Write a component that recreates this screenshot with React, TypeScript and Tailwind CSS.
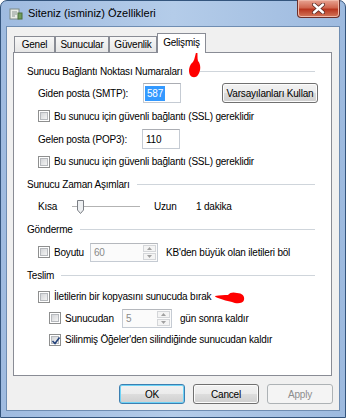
import React from "react";

// Win7 "Siteniz (isminiz) Özellikleri" dialog, Gelişmiş tab

function CheckBox({ checked }: { checked?: boolean }) {
    return (
        <span className="w-[12px] h-[12px] border border-[#8e8f8f] bg-white p-[1px] flex shrink-0">
            <span className="relative flex-1 border border-[#b6b9bd] bg-[linear-gradient(135deg,#d3d5d8,#f4f4f4)]">
                {checked && (
                    <svg width="10" height="10" viewBox="0 0 10 10" className="absolute -left-[1px] -top-[1px]">
                        <path d="M1.5 5 L4 7.5 L8.5 1.5" fill="none" stroke="#22417a" strokeWidth="1.6" />
                    </svg>
                )}
            </span>
        </span>
    );
}

function GroupHeader({ title, lineStart }: { title: string; lineStart?: string }) {
    return (
        <div className="flex items-center h-[22px] pl-[13px] pr-[16px]">
            <span className="whitespace-nowrap">{title}</span>
            <span className={`flex-1 h-px bg-[#cfd5db] ${lineStart ?? "ml-[7px]"}`} />
        </div>
    );
}

function TextBox({ value, selected }: { value: string; selected?: boolean }) {
    return (
        <div className="w-[38px] h-[20px] border border-[#c5cbd3] border-t-[#abadb3] bg-white flex items-center pl-[1px]">
            <span className={selected ? "bg-[#3399ff] text-white px-[2px]" : "px-[2px]"}>{value}</span>
        </div>
    );
}

function SpinBox({ value, width }: { value: string; width: string }) {
    return (
        <div className={`${width} h-[19px] border border-[#c5cbd3] border-t-[#b5b8bd] bg-[#fbfbfb] flex`}>
            <span className="flex-1 pl-[3px] flex items-center text-[#8a8a8a]">{value}</span>
            <div className="w-[15px] flex flex-col gap-px p-px">
                <div className="flex-1 border border-[#d4d6d9] bg-[#f4f4f4] flex items-center justify-center">
                    <svg width="5" height="3" viewBox="0 0 5 3"><path d="M0 3 L2.5 0 L5 3 Z" fill="#a0a0a0" /></svg>
                </div>
                <div className="flex-1 border border-[#d4d6d9] bg-[#f4f4f4] flex items-center justify-center">
                    <svg width="5" height="3" viewBox="0 0 5 3"><path d="M0 0 L2.5 3 L5 0 Z" fill="#a0a0a0" /></svg>
                </div>
            </div>
        </div>
    );
}

function Button({ label, kind }: { label: string; kind?: "default" | "disabled" }) {
    if (kind === "disabled") {
        return (
            <div className="w-[66px] h-[20px] rounded-[3px] border border-[#adb2b5] bg-[#f4f4f4] flex items-center justify-center text-[#8d8d8d]">
                {label}
            </div>
        );
    }
    const ring = kind === "default"
        ? "border-[#3c7fb1] shadow-[inset_0_0_0_1px_#6ed3f6]"
        : "border-[#707070] shadow-[inset_0_0_0_1px_#fcfcfc]";
    return (
        <div className={`w-[66px] h-[20px] rounded-[3px] border ${ring} bg-[linear-gradient(#f2f2f2,#ebebeb_50%,#dddddd_50%,#cfcfcf)] flex items-center justify-center text-black`}>
            {label}
        </div>
    );
}

function Tab({ label, width, active }: { label: string; width: string; active?: boolean }) {
    if (active) {
        return (
            <div className={`${width} h-[20px] -mb-px relative z-10 border border-b-0 border-[#898c95] bg-white flex items-center justify-center pb-[2px]`}>
                {label}
            </div>
        );
    }
    return (
        <div className={`${width} h-[16px] border border-b-0 border-[#898c95] bg-[linear-gradient(#f7f7f7,#e6e6e6)] flex items-center justify-center`}>
            {label}
        </div>
    );
}

function CloseButton() {
    return (
        <div className="self-start w-[43px] h-[18px] rounded-b-[4px] border border-t-0 border-[#6b2f2a] bg-[linear-gradient(#e8a493,#d0664f_45%,#b8361f_55%,#d4785c)] shadow-[inset_0_0_0_1px_#f0b8a8] flex items-center justify-center">
            <svg width="13" height="11" viewBox="0 0 13 11">
                <path d="M2 1.5 L11 9.5 M11 1.5 L2 9.5" stroke="#5a2a24" strokeWidth="4" strokeLinecap="round" />
                <path d="M2 1.5 L11 9.5 M11 1.5 L2 9.5" stroke="#ffffff" strokeWidth="2.4" strokeLinecap="round" />
            </svg>
        </div>
    );
}

function TitleIcon() {
    return (
        <svg width="14" height="14" viewBox="0 0 14 14" className="ml-[3px] mr-[5px]">
            <rect x="1" y="2" width="9" height="10" fill="#e9ece7" stroke="#7d8a86" />
            <path d="M3 5 H8 M3 7 H8 M3 9 H6" stroke="#8a9690" />
            <rect x="9" y="6" width="4" height="6" fill="#6f9c5b" stroke="#4c6f3d" />
        </svg>
    );
}

export default function App() {
    return (
        <div className="w-[346px] h-[418px] font-['Liberation_Sans',Arial,sans-serif] text-[10px] tracking-[-0.2px] text-black">
            <div className="h-full flex flex-col rounded-t-[7px] border border-[#34557d] bg-[linear-gradient(90deg,#9fbbe0,#b4cce9_50%,#9dbadf)] px-[5px] pb-[6px]">
                {/* title bar */}
                <div className="h-[25px] flex items-center">
                    <TitleIcon />
                    <span className="text-[11px] tracking-normal text-black">Siteniz (isminiz) Özellikleri</span>
                    <div className="ml-auto self-start -mt-px">
                        <CloseButton />
                    </div>
                </div>

                {/* client area */}
                <div className="relative flex-1 border border-[#6f8db2] bg-[#f0f0f0] pt-[6px] pl-[6px]">
                    <div className="flex items-end h-[19px] pl-[1px]">
                        <Tab label="Genel" width="w-[41px]" />
                        <Tab label="Sunucular" width="w-[54px]" />
                        <Tab label="Güvenlik" width="w-[48px]" />
                        <Tab label="Gelişmiş" width="w-[49px]" active />
                    </div>

                    <div className="w-[319px] h-[324px] border border-[#898c95] bg-white pt-[7px]">
                        <GroupHeader title="Sunucu Bağlantı Noktası Numaraları" lineStart="ml-[17px]" />

                        <div className="h-[22px] flex items-center pl-[24px]">
                            <span className="w-[105px]">Giden posta (SMTP):</span>
                            <TextBox value="587" selected />
                            <div className="ml-[41px]">
                                <div className="w-[96px] h-[20px] rounded-[3px] border border-[#707070] shadow-[inset_0_0_0_1px_#fcfcfc] bg-[linear-gradient(#f2f2f2,#ebebeb_50%,#dddddd_50%,#cfcfcf)] flex items-center justify-center">
                                    Varsayılanları Kullan
                                </div>
                            </div>
                        </div>

                        <div className="h-[24px] flex items-center pl-[24px] gap-[4px]">
                            <CheckBox />
                            <span>Bu sunucu için güvenli bağlantı (SSL) gereklidir</span>
                        </div>

                        <div className="h-[22px] flex items-center pl-[24px]">
                            <span className="w-[104px]">Gelen posta (POP3):</span>
                            <TextBox value="110" />
                        </div>

                        <div className="h-[23px] flex items-center pl-[24px] gap-[4px]">
                            <CheckBox />
                            <span>Bu sunucu için güvenli bağlantı (SSL) gereklidir</span>
                        </div>

                        <GroupHeader title="Sunucu Zaman Aşımları" />

                        <div className="h-[23px] flex items-center pl-[24px]">
                            <span className="w-[32px]">Kısa</span>
                            <svg width="72" height="16" viewBox="0 0 72 16">
                                <line x1="2" y1="7.5" x2="70" y2="7.5" stroke="#b3b3b3" />
                                <line x1="2" y1="8.5" x2="70" y2="8.5" stroke="#ffffff" />
                                <path d="M7.5 1.5 H13.5 V11 L10.5 14.5 L7.5 11 Z" fill="#eef0f2" stroke="#7b7f85" />
                            </svg>
                            <span className="ml-[12px] w-[42px]">Uzun</span>
                            <span>1 dakika</span>
                        </div>

                        <GroupHeader title="Gönderme" />

                        <div className="h-[24px] flex items-center pl-[24px]">
                            <CheckBox />
                            <span className="ml-[4px] w-[36px]">Boyutu</span>
                            <SpinBox value="60" width="w-[68px]" />
                            <span className="ml-[8px]">KB'den büyük olan iletileri böl</span>
                        </div>

                        <GroupHeader title="Teslim" />

                        <div className="h-[21px] flex items-center pl-[24px] gap-[4px]">
                            <CheckBox />
                            <span>İletilerin bir kopyasını sunucuda bırak</span>
                        </div>

                        <div className="h-[22px] flex items-center pl-[35px]">
                            <CheckBox />
                            <span className="ml-[4px] w-[57px]">Sunucudan</span>
                            <SpinBox value="5" width="w-[50px]" />
                            <span className="ml-[8px]">gün sonra kaldır</span>
                        </div>

                        <div className="h-[21px] flex items-center pl-[35px] gap-[4px]">
                            <CheckBox checked />
                            <span>Silinmiş Öğeler'den silindiğinde sunucudan kaldır</span>
                        </div>
                    </div>

                    <div className="flex gap-[8px] justify-end pr-[6px] mt-[8px]">
                        <Button label="OK" kind="default" />
                        <Button label="Cancel" />
                        <Button label="Apply" kind="disabled" />
                    </div>

                    {/* hand-drawn red markers */}
                    <svg width="16" height="30" viewBox="0 0 16 30" className="absolute left-[180px] top-[22px]">
                        <path d="M10 1 C11 5 10 9 11 12 C14 15 14 22 11 26 C9 29 5 29 3 26 C1 22 2 16 6 13 C8 10 8 5 10 1 Z" fill="#ff0000" />
                    </svg>
                    <svg width="32" height="14" viewBox="0 0 32 14" className="absolute left-[207px] top-[264px]">
                        <path d="M1 5 C6 4 10 4 14 4 C16 1 20 1 23 2 C28 2 31 5 30 9 C29 13 22 13 18 11 C14 10 9 9 4 7 C2 6 1 6 1 5 Z" fill="#ff0000" />
                    </svg>
                </div>
            </div>
        </div>
    );
}
